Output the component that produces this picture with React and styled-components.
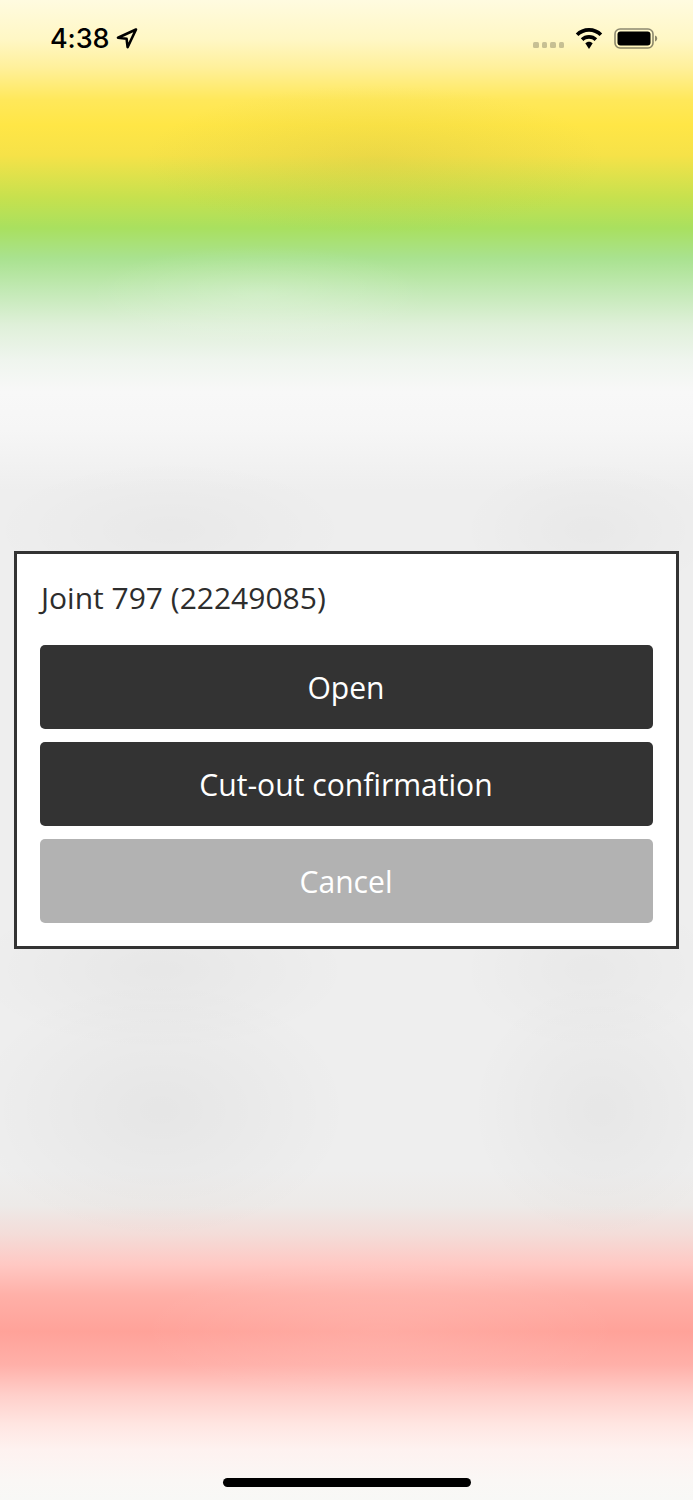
import React from "react";
import styled, { createGlobalStyle } from "styled-components";

const Global = createGlobalStyle`
  html, body { margin: 0; padding: 0; }
  body { font-family: "Open Sans", "Liberation Sans", sans-serif; }
`;

const Screen = styled.div`
  position: relative;
  width: 693px;
  height: 1500px;
  overflow: hidden;
  display: flex;
  align-items: center;
  justify-content: center;
  background:
    radial-gradient(ellipse 230px 75px at 375px 160px, rgba(170, 160, 60, 0.15), rgba(170, 160, 60, 0) 100%),
    radial-gradient(ellipse 170px 50px at 260px 295px, rgba(255, 255, 255, 0.2), rgba(255, 255, 255, 0) 100%),
    radial-gradient(ellipse 240px 70px at 380px 1330px, rgba(255, 255, 255, 0.1), rgba(255, 255, 255, 0) 100%),
    radial-gradient(ellipse 190px 130px at 160px 1110px, rgba(0, 0, 0, 0.035), rgba(0, 0, 0, 0) 100%),
    radial-gradient(ellipse 130px 130px at 600px 1110px, rgba(0, 0, 0, 0.03), rgba(0, 0, 0, 0) 100%),
    radial-gradient(ellipse 190px 80px at 160px 970px, rgba(0, 0, 0, 0.03), rgba(0, 0, 0, 0) 100%),
    radial-gradient(ellipse 130px 80px at 590px 970px, rgba(0, 0, 0, 0.025), rgba(0, 0, 0, 0) 100%),
    radial-gradient(ellipse 180px 70px at 170px 530px, rgba(0, 0, 0, 0.025), rgba(0, 0, 0, 0) 100%),
    radial-gradient(ellipse 130px 70px at 590px 530px, rgba(0, 0, 0, 0.025), rgba(0, 0, 0, 0) 100%),
    linear-gradient(
      180deg,
      #fffbe0 0px,
      #fff7c4 40px,
      #fff09a 68px,
      #ffe85a 100px,
      #ffe646 125px,
      #f6e248 155px,
      #c6e14e 198px,
      #a9e05f 228px,
      #a9e28f 258px,
      #c2e9b4 290px,
      #dff0d9 325px,
      #eff5ee 360px,
      #f8f8f8 392px,
      #f6f6f6 430px,
      #eeeeee 490px,
      #eeeeee 1170px,
      #edeae8 1205px,
      #f4dcd8 1235px,
      #ffc8c3 1265px,
      #ffb0a8 1295px,
      #ffa299 1332px,
      #ffb0a9 1365px,
      #ffcfca 1395px,
      #ffe6e2 1425px,
      #fef2f0 1450px,
      #faf7f5 1480px,
      #f8f8f6 1500px
    );
`;

const StatusBar = styled.div`
  position: absolute;
  top: 0;
  left: 0;
  right: 0;
  height: 76px;
  padding: 0 35px 0 50px;
  box-sizing: border-box;
  display: flex;
  align-items: center;
  justify-content: space-between;
`;

const TimeGroup = styled.div`
  display: flex;
  align-items: center;
  gap: 7px;
`;

const Time = styled.span`
  font-family: Inter, "Liberation Sans", sans-serif;
  font-size: 27px;
  font-weight: 550;
  letter-spacing: -0.1px;
  color: #000;
  line-height: 1;
`;

const StatusIcons = styled.div`
  display: flex;
  align-items: center;
  gap: 11px;
`;

const SignalDots = styled.div`
  display: flex;
  gap: 3px;
  margin-top: 13px;
`;

const Dot = styled.span`
  width: 5.5px;
  height: 6px;
  border-radius: 1.5px;
  background: rgba(0, 0, 0, 0.22);
`;

const Dialog = styled.div`
  width: 665px;
  height: 398px;
  box-sizing: border-box;
  background: #fff;
  border: 3px solid #333;
  padding: 23px 23px 0;
  display: flex;
  flex-direction: column;
`;

const Title = styled.div`
  font-size: 30px;
  line-height: 42px;
  color: #2d2d2d;
  height: 68px;
  padding-left: 1px;
`;

const Actions = styled.div`
  display: flex;
  flex-direction: column;
  gap: 13px;
`;

const Button = styled.button`
  height: 84px;
  width: 100%;
  border: 0;
  border-radius: 5px;
  background: ${(p) => (p.$muted ? "#b2b2b2" : "#333")};
  color: #fff;
  font-family: inherit;
  font-size: 30.1px;
  padding: 0 1px 0 0;
`;

const HomeIndicator = styled.div`
  position: absolute;
  left: 223px;
  bottom: 13px;
  width: 248px;
  height: 9px;
  border-radius: 5px;
  background: #000;
`;

export default function App() {
  return (
    <Screen>
      <Global />
      <StatusBar>
        <TimeGroup>
          <Time>4:38</Time>
          <svg width="22" height="22" viewBox="0 0 22 22" fill="none">
            <path d="M20 2.500 2 10.800l8.600 1 1 8.400z" stroke="#000" strokeWidth="2.600" strokeLinejoin="round" />
          </svg>
        </TimeGroup>
        <StatusIcons>
          <SignalDots>
            <Dot /><Dot /><Dot /><Dot />
          </SignalDots>
          <svg width="28" height="21" viewBox="0 0 28 21">
            <path d="M14 0C8.800 0 4.200 2 .8 5.400l2.600 2.700C6.100 5.400 9.900 3.800 14 3.800s7.900 1.600 10.600 4.300l2.600-2.700C23.800 2 19.200 0 14 0z" fill="#000" />
            <path d="M14 7C10.800 7 8 8.200 5.800 10.300l2.600 2.700C9.900 11.600 11.800 10.700 14 10.700s4.100.9 5.600 2.300l2.600-2.700C20 8.200 17.200 7 14 7z" fill="#000" />
            <path d="M14 13.800c-1.500 0-2.800.6-3.700 1.500L14 21l3.700-5.700c-.9-.9-2.200-1.500-3.700-1.500z" fill="#000" />
          </svg>
          <svg width="44" height="21" viewBox="0 0 44 21">
            <rect x="1" y="1" width="38" height="19" rx="5" fill="none" stroke="#000" strokeOpacity="0.45" strokeWidth="1.600" />
            <rect x="3.500" y="3.500" width="33" height="14" rx="3" fill="#000" />
            <path d="M41 7.500c1.400.4 2.200 1.600 2.200 3s-.8 2.600-2.200 3z" fill="#000" fillOpacity="0.45" />
          </svg>
        </StatusIcons>
      </StatusBar>
      <Dialog>
        <Title>Joint 797 (22249085)</Title>
        <Actions>
          <Button>Open</Button>
          <Button>Cut-out confirmation</Button>
          <Button $muted>Cancel</Button>
        </Actions>
      </Dialog>
      <HomeIndicator />
    </Screen>
  );
}
